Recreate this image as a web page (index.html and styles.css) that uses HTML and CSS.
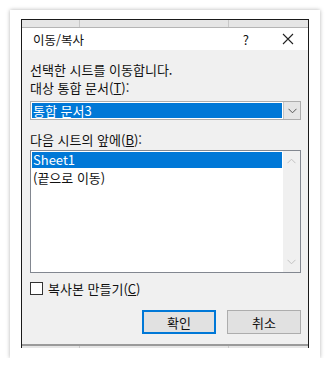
FILE: index.html
```html
<!DOCTYPE html>
<html lang="ko">
<head>
  <meta charset="UTF-8">
  <title>이동/복사</title>
  <link rel="stylesheet" href="styles.css">
</head>
<body>
  <div class="frame">
    <div class="window">
      <div class="strip"></div>
      <div class="dialog">
        <div class="titlebar">
          <span class="title">이동/복사</span>
          <span class="help">?</span>
          <svg class="close" width="12" height="12" viewBox="0 0 12 12">
            <path d="M1 1 L11 11 M11 1 L1 11" stroke="#222" stroke-width="1.1" fill="none"/>
          </svg>
        </div>
        <div class="body">
          <div class="label">선택한 시트를 이동합니다.</div>
          <div class="label">대상 통합 문서(<u>T</u>):</div>
          <div class="combo">
            <div class="combo-value">통합 문서3</div>
            <div class="combo-arrow">
              <svg width="9" height="6" viewBox="0 0 9 6"><path d="M0.5 0.8 L4.5 4.8 L8.5 0.8" stroke="#555" stroke-width="1" fill="none"/></svg>
            </div>
          </div>
          <div class="label label-gap">다음 시트의 앞에(<u>B</u>):</div>
          <div class="listbox">
            <div class="items">
              <div class="item selected">Sheet1</div>
              <div class="item">(끝으로 이동)</div>
            </div>
            <div class="scrollbar">
              <svg width="9" height="6" viewBox="0 0 9 6"><path d="M0.5 5.2 L4.5 1.2 L8.5 5.2" stroke="#c2c2c2" stroke-width="1" fill="none"/></svg>
              <svg width="9" height="6" viewBox="0 0 9 6"><path d="M0.5 0.8 L4.5 4.8 L8.5 0.8" stroke="#c2c2c2" stroke-width="1" fill="none"/></svg>
            </div>
          </div>
          <label class="check">
            <span class="box"></span>
            <span>복사본 만들기(<u>C</u>)</span>
          </label>
          <div class="buttons">
            <button class="btn default">확인</button>
            <button class="btn">취소</button>
          </div>
        </div>
      </div>
      <div class="strip bottom"></div>
    </div>
  </div>
</body>
</html>
```

FILE: styles.css
```css
* {
  margin: 0;
  padding: 0;
  box-sizing: border-box;
}

body {
  background-color: #fff;
  font-family: "Noto Sans CJK KR", "Noto Sans", sans-serif;
  font-size: 13px;
  color: #111;
}

.frame {
  width: 310px;
  height: 348px;
  margin: 10px 0 0 10px;
  padding: 9px 0 0 11px;
  background-color: #fff;
  box-shadow: 0 0 4px rgba(0, 0, 0, 0.3);
}

.window {
  width: 288px;
  height: 329px;
  border: 1px solid #1a1a1a;
  border-bottom: none;
  display: flex;
  flex-direction: column;
}

.strip {
  height: 7px;
  background-color: #e6e6e6;
  background-image:
    linear-gradient(#c8c8c8, #c8c8c8),
    linear-gradient(#c8c8c8, #c8c8c8);
  background-size: 1px 100%, 1px 100%;
  background-position: 57px 0, 206px 0;
  background-repeat: no-repeat;
}

.strip.bottom {
  height: 4px;
  border-top: 2px solid #9a9a9a;
}

.dialog {
  flex: 1;
  display: flex;
  flex-direction: column;
  background-color: #f0f0f0;
  border-top: 1px solid #b5b5b5;
}

.titlebar {
  height: 22px;
  background-color: #fff;
  display: flex;
  align-items: center;
  padding: 0 14px 0 11px;
  font-size: 12.5px;
}

.title {
  flex: 1;
}

.help {
  margin-right: 33px;
  font-size: 13px;
}

.body {
  flex: 1;
  display: flex;
  flex-direction: column;
  padding: 11px 7px 0 8px;
}

.label {
  height: 18px;
  line-height: 18px;
}

.label-gap {
  margin-top: 11px;
}

.combo {
  height: 19px;
  margin-top: 4px;
  border: 1px solid #adadad;
  background-color: #fff;
  display: flex;
}

.combo-value {
  flex: 1;
  margin: 1px;
  background-color: #0078d7;
  color: #fff;
  line-height: 15px;
  padding-left: 1px;
}

.combo-arrow {
  width: 17px;
  background-color: #e5e5e5;
  border-left: 1px solid #c4c4c4;
  display: flex;
  align-items: center;
  justify-content: center;
}

.listbox {
  height: 123px;
  margin-top: 1px;
  border: 1px solid #828790;
  background-color: #fff;
  display: flex;
}

.items {
  flex: 1;
  padding: 1px;
}

.item {
  height: 17px;
  line-height: 17px;
  padding-left: 1px;
}

.item.selected {
  height: 16px;
  line-height: 16px;
  margin-bottom: 1px;
  background-color: #0078d7;
  color: #fff;
}

.scrollbar {
  width: 17px;
  background-color: #f0f0f0;
  display: flex;
  flex-direction: column;
  justify-content: space-between;
  align-items: center;
  padding: 7px 0 7px;
}

.check {
  display: flex;
  align-items: center;
  gap: 5px;
  margin-top: 8px;
  height: 14px;
}

.box {
  width: 13px;
  height: 13px;
  border: 1px solid #333;
  background-color: #fff;
}

.buttons {
  display: flex;
  justify-content: flex-end;
  gap: 11px;
  margin-top: 15px;
}

.btn {
  width: 74px;
  height: 24px;
  font-family: inherit;
  font-size: 13px;
  color: #111;
  background-color: #e1e1e1;
  border: 1px solid #adadad;
}

.btn.default {
  border: 2px solid #0078d7;
}
```
